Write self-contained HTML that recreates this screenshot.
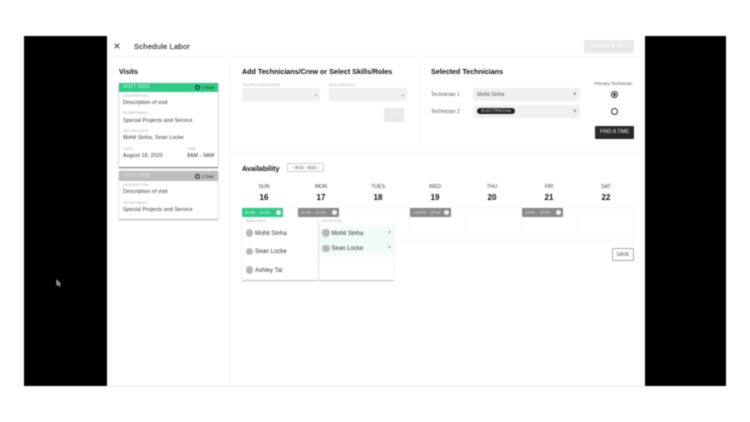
<!DOCTYPE html>
<html>
<head>
<meta charset="utf-8">
<style>
html,body{margin:0;padding:0;background:#fff}
#p{position:relative;width:750px;height:422px;overflow:hidden;background:#fff;font-family:"Liberation Sans",sans-serif;color:#333;filter:blur(.45px)}
#p div{position:absolute;white-space:nowrap;box-sizing:border-box}
.h{font-weight:700;font-size:7.15px;color:#111;line-height:10px}
.l{font-size:3.6px;color:#aaa;line-height:5px;letter-spacing:.1px}
.t{font-size:5.3px;color:#333;line-height:7px;letter-spacing:.08px}
.dn{font-size:5.2px;color:#444;line-height:7px;text-align:center;width:40px}
.dd{font-size:8px;font-weight:700;color:#111;line-height:10px;text-align:center;width:40px}
.tag{height:9px;width:41px;border-radius:1px;color:#ddd;font-size:4.6px;line-height:9px;padding-left:3px;background:#8a8a8a;letter-spacing:.2px}
.tag i{position:absolute;right:2px;top:2px;width:5px;height:5px;border-radius:50%;background:#eee}
.av{width:7.5px;height:7.5px;border-radius:50%;background:#b9b9b9}
.n{font-size:6px;color:#333;line-height:8px}
.x{font-size:6px;color:#555;line-height:7px}
.f{background:#f0f0f0;height:13px}
</style>
</head>
<body>
<div id="p">
<div style="left:24px;top:36px;width:83px;height:350px;background:#000"></div>
<div style="left:645px;top:36px;width:81px;height:350px;background:#000"></div>
<div style="left:107px;top:386px;width:538px;height:1px;background:#e8e8e8"></div>
<svg style="position:absolute;left:56px;top:279px" width="6" height="8" viewBox="0 0 6 8"><path d="M.5.5V6.5L2 5.2 3.2 7.5 4.3 7 3.2 4.8H5Z" fill="#888" stroke="#ccc" stroke-width=".4"/></svg>

<div style="left:107px;top:56px;width:538px;height:1px;background:#f5f5f5"></div>
<div style="left:229px;top:56px;width:1px;height:330px;background:#f3f3f3"></div>
<div style="left:418px;top:56px;width:1px;height:94px;background:#f5f5f5"></div>
<div style="left:230px;top:152px;width:415px;height:1px;background:#f3f3f3"></div>

<svg style="position:absolute;left:113.5px;top:42.5px" width="6" height="6" viewBox="0 0 6 6"><path d="M.7.7 5.3 5.3M5.3.7.7 5.3" stroke="#333" stroke-width=".9"/></svg>
<div style="left:134px;top:42px;font-size:7.7px;line-height:10px;color:#333;letter-spacing:.15px;-webkit-text-stroke:.15px #333">Schedule Labor</div>
<div style="left:584px;top:40px;width:50px;height:13px;background:#e9e9e9;border-radius:1px;color:#f8f8f8;font-size:4.8px;line-height:13px;text-align:center;font-weight:700">GENERATE VISIT</div>

<div class="h" style="left:119px;top:66.5px">Visits</div>

<div style="left:119px;top:83px;width:99px;height:84px;background:#fff;box-shadow:0 1px 1px #666,0 0 2px #ddd"></div>
<div style="left:119px;top:83px;width:99px;height:9px;background:#2ecc85"></div>
<div style="left:123px;top:84px;font-size:5px;line-height:7px;color:#d5f5e5;letter-spacing:.2px">VISIT 0001</div>
<div style="left:195px;top:85px;width:5px;height:5px;border:1px solid #222;border-radius:50%"></div>
<div style="left:202px;top:84px;font-size:4.2px;line-height:7px;color:#222">1 hour</div>
<div class="l" style="left:123px;top:94px">DESCRIPTION</div>
<div class="t" style="left:123px;top:100px">Description of visit</div>
<div class="l" style="left:123px;top:111px">DEPARTMENT</div>
<div class="t" style="left:123px;top:117.5px">Special Projects and Service</div>
<div class="l" style="left:123px;top:129px">TECHNICIANS</div>
<div class="t" style="left:123px;top:135px">Mohit Sinha, Sean Locke</div>
<div class="l" style="left:123px;top:147px">DATE</div>
<div class="t" style="left:123px;top:153px">August 18, 2020</div>
<div class="l" style="left:187px;top:147px">TIME</div>
<div class="t" style="left:187px;top:153px">8AM - 9AM</div>

<div style="left:119px;top:171px;width:99px;height:48px;background:#fff;box-shadow:0 1px 1px #aaa,0 0 2px #ddd"></div>
<div style="left:119px;top:171px;width:99px;height:10px;background:#bdbdbd"></div>
<div style="left:123px;top:173px;font-size:5px;line-height:7px;color:#e8e8e8;letter-spacing:.2px">VISIT 0002</div>
<div style="left:195px;top:173.5px;width:5px;height:5px;border:1px solid #222;border-radius:50%"></div>
<div style="left:202px;top:173px;font-size:4.2px;line-height:7px;color:#222">1 hour</div>
<div class="l" style="left:123px;top:183px">DESCRIPTION</div>
<div class="t" style="left:123px;top:189px">Description of visit</div>
<div class="l" style="left:123px;top:200.5px">DEPARTMENT</div>
<div class="t" style="left:123px;top:206.5px">Special Projects and Service</div>

<div class="h" style="left:242px;top:66.5px">Add Technicians/Crew or Select Skills/Roles</div>
<div class="l" style="left:242px;top:83px">TECHNICIANS/CREW</div>
<div class="f" style="left:242px;top:88px;width:78px"></div>
<div style="left:314.5px;top:95px;border:1.4px solid transparent;border-top:1.8px solid #333"></div>
<div class="l" style="left:329px;top:83px">SKILLS/ROLES</div>
<div class="f" style="left:329px;top:88px;width:78px"></div>
<div style="left:401.5px;top:95px;border:1.4px solid transparent;border-top:1.8px solid #333"></div>
<div style="left:384px;top:108px;width:20px;height:14px;background:#e9e9e9;border-radius:1px;color:#f8f8f8;font-size:4.8px;line-height:14px;text-align:center;font-weight:700">ADD</div>

<div class="h" style="left:431px;top:66.5px">Selected Technicians</div>
<div style="left:594.5px;top:80px;font-size:4.5px;line-height:7px;color:#555">Primary Technician</div>
<div style="left:431px;top:92px;font-size:5.2px;line-height:7px;color:#555">Technician 1</div>
<div class="f" style="left:473px;top:88px;width:107px"></div>
<div style="left:477px;top:92px;font-size:5.2px;line-height:7px;color:#555">Mohit Sinha</div>
<div class="x" style="left:573px;top:92px">×</div>
<div style="left:431px;top:109px;font-size:5.2px;line-height:7px;color:#555">Technician 2</div>
<div class="f" style="left:473px;top:105px;width:107px"></div>
<div style="left:477px;top:108px;width:38px;height:6px;background:#222;border-radius:3px;color:#ddd;font-size:4.5px;line-height:6px;text-align:center">ELECTRICIAN</div>
<div class="x" style="left:573px;top:109px">×</div>
<div style="left:611px;top:91px;width:7px;height:7px;border:.8px solid #333;border-radius:50%"></div>
<div style="left:612.75px;top:92.75px;width:3.5px;height:3.5px;background:#333;border-radius:50%"></div>
<div style="left:611px;top:107.5px;width:7px;height:7px;border:.8px solid #333;border-radius:50%"></div>
<div style="left:595px;top:125.5px;width:39px;height:13px;background:#2a2a2a;border-radius:1px;color:#eee;font-size:5px;line-height:13px;text-align:center">FIND A TIME</div>

<div class="h" style="left:242px;top:163.5px">Availability</div>
<div style="left:287px;top:162.5px;width:37px;height:9.5px;border:.7px solid #ccc;border-radius:1px;font-size:4.4px;line-height:8.5px;text-align:center;color:#444">‹ 8/16 - 8/22 ›</div>

<div class="dn" style="left:244px;top:184px">SUN</div><div class="dd" style="left:244px;top:193px">16</div>
<div class="dn" style="left:301px;top:184px">MON</div><div class="dd" style="left:301px;top:193px">17</div>
<div class="dn" style="left:358px;top:184px">TUES</div><div class="dd" style="left:358px;top:193px">18</div>
<div class="dn" style="left:415px;top:184px">WED</div><div class="dd" style="left:415px;top:193px">19</div>
<div class="dn" style="left:472px;top:184px">THU</div><div class="dd" style="left:472px;top:193px">20</div>
<div class="dn" style="left:529px;top:184px">FRI</div><div class="dd" style="left:529px;top:193px">21</div>
<div class="dn" style="left:586px;top:184px">SAT</div><div class="dd" style="left:586px;top:193px">22</div>

<div style="left:242px;top:207px;width:392px;height:34px;border:1px solid #f4f4f4"></div>
<div style="left:296px;top:207px;width:1px;height:34px;background:#f6f6f6"></div>
<div style="left:353px;top:207px;width:1px;height:34px;background:#f6f6f6"></div>
<div style="left:409px;top:207px;width:1px;height:34px;background:#f6f6f6"></div>
<div style="left:466px;top:207px;width:1px;height:34px;background:#f6f6f6"></div>
<div style="left:522px;top:207px;width:1px;height:34px;background:#f6f6f6"></div>
<div style="left:578px;top:207px;width:1px;height:34px;background:#f6f6f6"></div>

<div class="tag" style="left:242px;top:208px;background:#2ecc85;color:#d5f5e5">8AM - 9AM<i></i></div>
<div class="tag" style="left:298px;top:208px">8AM - 9AM<i></i></div>
<div class="tag" style="left:410px;top:208px">12PM - 1PM<i></i></div>
<div class="tag" style="left:522px;top:208px">2PM - 3PM<i></i></div>

<div style="left:242px;top:219px;width:76px;height:61px;background:#fff;box-shadow:0 1px 1px #bbb"></div>
<div class="l" style="left:246px;top:219px">AVAILABLE</div>
<div class="av" style="left:245.5px;top:229px"></div><div class="n" style="left:255px;top:229.5px">Mohit Sinha</div>
<div class="av" style="left:245.5px;top:247.5px"></div><div class="n" style="left:255px;top:248px">Sean Locke</div>
<div class="av" style="left:245.5px;top:266px"></div><div class="n" style="left:255px;top:266.5px">Ashley Tai</div>

<div style="left:319px;top:219px;width:75px;height:61px;background:#fff;box-shadow:0 1px 1px #bbb,-1px 0 0 #e8e8e8"></div>
<div style="left:319px;top:224px;width:75px;height:34px;background:linear-gradient(#fbfefd,#effbf6 25%,#effbf6 75%,#fbfefd)"></div>
<div class="l" style="left:322px;top:219px">SELECTED</div>
<div class="av" style="left:322px;top:229px"></div><div class="n" style="left:331.5px;top:229.5px">Mohit Sinha</div>
<div class="x" style="left:388px;top:229.5px;font-size:5px">×</div>
<div class="av" style="left:322px;top:244.5px"></div><div class="n" style="left:331.5px;top:245px">Sean Locke</div>
<div class="x" style="left:388px;top:245px;font-size:5px">×</div>

<div style="left:612px;top:248px;width:22px;height:13px;border:.7px solid #aaa;border-radius:1.5px;font-size:5px;line-height:12px;text-align:center;color:#555">SAVE</div>
</div>
</body>
</html>
